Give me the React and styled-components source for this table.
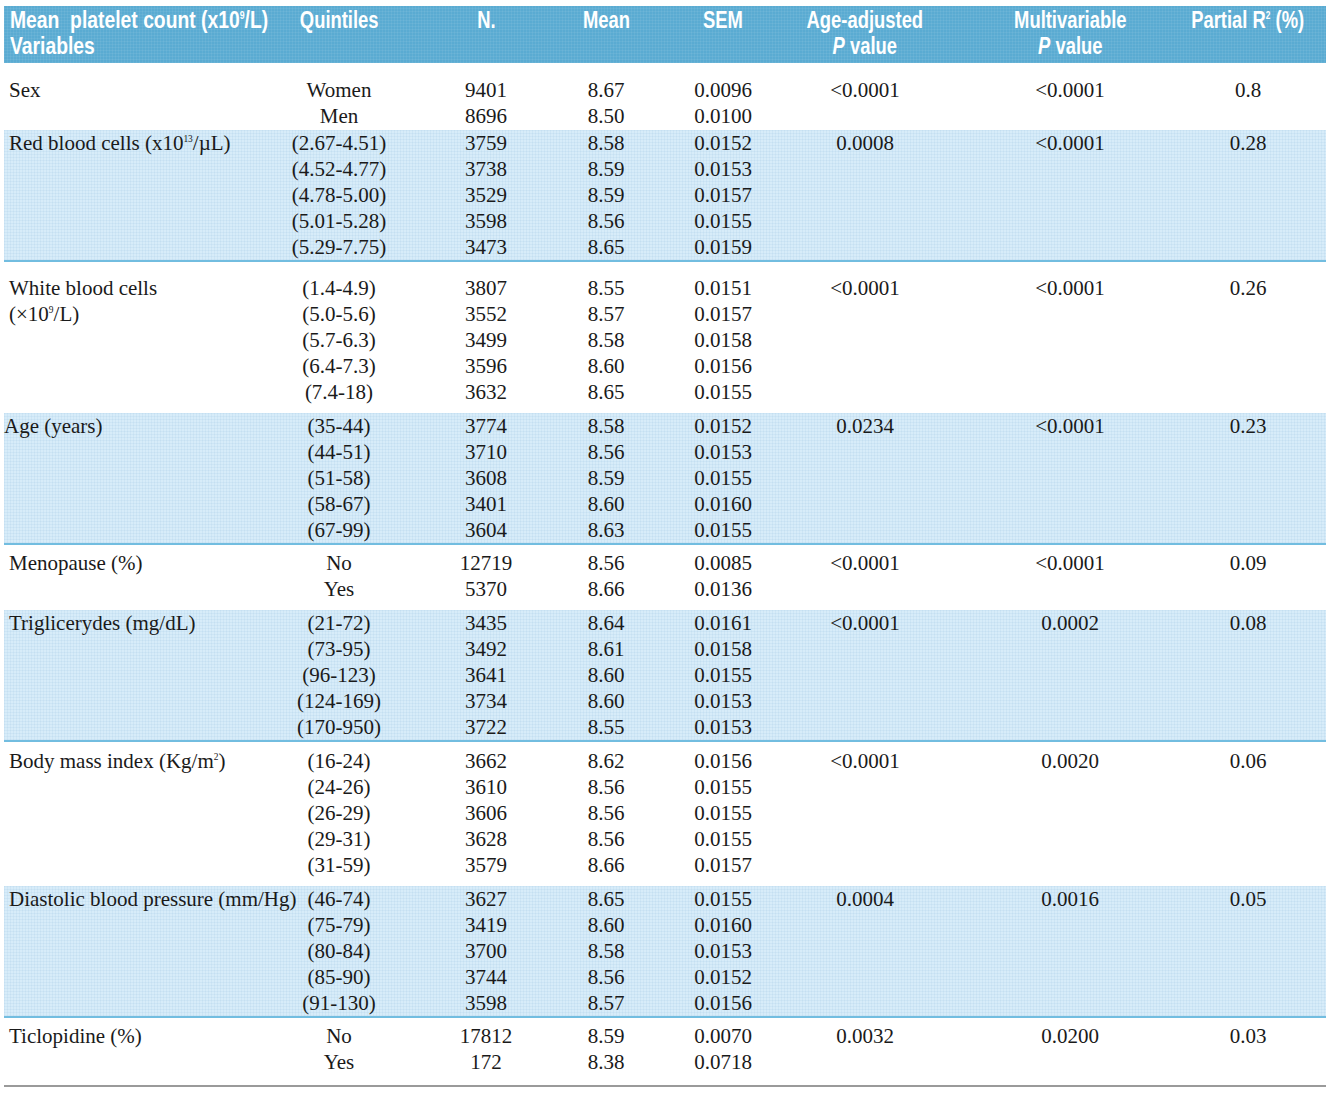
import React from 'react';
import styled, { createGlobalStyle } from 'styled-components';

const GlobalStyle = createGlobalStyle`
  body {
    margin: 0;
    background: #ffffff;
  }
`;

const COLS = '266px 138px 156px 84px 150px 134px 276px 80px 38px';

const StyledTable = styled.div`
  margin: 6px 5px 0 4px;
  width: 1322px;
  font-family: 'Liberation Serif', 'Times New Roman', serif;
  font-size: 21px;
  color: #1a1a1a;
  border-bottom: 2px solid #9a9a9a;
`;

const HeaderRow = styled.div`
  display: grid;
  grid-template-columns: ${COLS};
  height: 57px;
  background-color: #5aabd2;
  background-image:
    repeating-linear-gradient(0deg, rgba(255, 255, 255, 0.06) 0 1px, transparent 1px 3px),
    repeating-linear-gradient(90deg, rgba(255, 255, 255, 0.06) 0 1px, transparent 1px 3px);
  color: #ffffff;
  font-family: 'Liberation Sans', Arial, sans-serif;
  font-weight: 700;
  font-size: 23px;
  line-height: 26px;
  padding-top: 1px;
  box-sizing: border-box;
`;

const HeadCell = styled.div`
  display: flex;
  justify-content: ${p => (p.$left ? 'flex-start' : 'center')};
  padding-left: ${p => (p.$left ? '6px' : '0')};
  white-space: nowrap;
`;

/* the print face is a condensed grotesque; squeeze Arial to match */
const HeadText = styled.span`
  display: inline-block;
  text-align: ${p => (p.$left ? 'left' : 'center')};
  transform: scaleX(${p => (p.$left ? 0.84 : 0.8)});
  transform-origin: ${p => (p.$left ? 'left' : 'center')} top;
  em {
    font-style: italic;
  }
`;

const Section = styled.div`
  display: grid;
  grid-template-columns: ${COLS};
  padding: ${p => p.$top}px 0 ${p => p.$bottom}px;
  line-height: 26px;
  background-color: ${p => (p.$shaded ? '#d7ecf9' : '#ffffff')};
  background-image: ${p =>
    p.$shaded
      ? `repeating-linear-gradient(0deg, rgba(120, 170, 210, 0.10) 0 1px, transparent 1px 3px),
         repeating-linear-gradient(90deg, rgba(120, 170, 210, 0.10) 0 1px, transparent 1px 3px)`
      : 'none'};
  border-bottom: ${p => (p.$shaded ? '2px solid #72bde0' : 'none')};
`;

const Label = styled.div`
  padding-left: ${p => p.$indent}px;
  white-space: nowrap;
  position: relative;
  z-index: 1;
`;

const Col = styled.div`
  display: flex;
  flex-direction: column;
  align-items: center;
  white-space: nowrap;
`;

const Sup = styled.sup`
  font-size: 0.45em;
  line-height: 0;
  vertical-align: 0.9em;
`;

const sections = [
  {
    label: 'Sex',
    top: 14, bottom: 1,
    q: ['Women', 'Men'],
    n: ['9401', '8696'],
    mean: ['8.67', '8.50'],
    sem: ['0.0096', '0.0100'],
    age: '<0.0001', multi: '<0.0001', r2: '0.8',
  },
  {
    label: <>Red blood cells (x10<Sup>13</Sup>/µL)</>,
    shaded: true, top: 0, bottom: 0,
    q: ['(2.67-4.51)', '(4.52-4.77)', '(4.78-5.00)', '(5.01-5.28)', '(5.29-7.75)'],
    n: ['3759', '3738', '3529', '3598', '3473'],
    mean: ['8.58', '8.59', '8.59', '8.56', '8.65'],
    sem: ['0.0152', '0.0153', '0.0157', '0.0155', '0.0159'],
    age: '0.0008', multi: '<0.0001', r2: '0.28',
  },
  {
    label: <>White blood cells<br />(×10<Sup>9</Sup>/L)</>,
    top: 13, bottom: 8,
    q: ['(1.4-4.9)', '(5.0-5.6)', '(5.7-6.3)', '(6.4-7.3)', '(7.4-18)'],
    n: ['3807', '3552', '3499', '3596', '3632'],
    mean: ['8.55', '8.57', '8.58', '8.60', '8.65'],
    sem: ['0.0151', '0.0157', '0.0158', '0.0156', '0.0155'],
    age: '<0.0001', multi: '<0.0001', r2: '0.26',
  },
  {
    label: 'Age (years)',
    indent: 0,
    shaded: true, top: 0, bottom: 0,
    q: ['(35-44)', '(44-51)', '(51-58)', '(58-67)', '(67-99)'],
    n: ['3774', '3710', '3608', '3401', '3604'],
    mean: ['8.58', '8.56', '8.59', '8.60', '8.63'],
    sem: ['0.0152', '0.0153', '0.0155', '0.0160', '0.0155'],
    age: '0.0234', multi: '<0.0001', r2: '0.23',
  },
  {
    label: 'Menopause (%)',
    top: 5, bottom: 8,
    q: ['No', 'Yes'],
    n: ['12719', '5370'],
    mean: ['8.56', '8.66'],
    sem: ['0.0085', '0.0136'],
    age: '<0.0001', multi: '<0.0001', r2: '0.09',
  },
  {
    label: 'Triglicerydes (mg/dL)',
    shaded: true, top: 0, bottom: 0,
    q: ['(21-72)', '(73-95)', '(96-123)', '(124-169)', '(170-950)'],
    n: ['3435', '3492', '3641', '3734', '3722'],
    mean: ['8.64', '8.61', '8.60', '8.60', '8.55'],
    sem: ['0.0161', '0.0158', '0.0155', '0.0153', '0.0153'],
    age: '<0.0001', multi: '0.0002', r2: '0.08',
  },
  {
    label: <>Body mass index (Kg/m<Sup>2</Sup>)</>,
    top: 6, bottom: 8,
    q: ['(16-24)', '(24-26)', '(26-29)', '(29-31)', '(31-59)'],
    n: ['3662', '3610', '3606', '3628', '3579'],
    mean: ['8.62', '8.56', '8.56', '8.56', '8.66'],
    sem: ['0.0156', '0.0155', '0.0155', '0.0155', '0.0157'],
    age: '<0.0001', multi: '0.0020', r2: '0.06',
  },
  {
    label: 'Diastolic blood pressure (mm/Hg)',
    shaded: true, top: 0, bottom: 0,
    q: ['(46-74)', '(75-79)', '(80-84)', '(85-90)', '(91-130)'],
    n: ['3627', '3419', '3700', '3744', '3598'],
    mean: ['8.65', '8.60', '8.58', '8.56', '8.57'],
    sem: ['0.0155', '0.0160', '0.0153', '0.0152', '0.0156'],
    age: '0.0004', multi: '0.0016', r2: '0.05',
  },
  {
    label: 'Ticlopidine (%)',
    top: 5, bottom: 10,
    q: ['No', 'Yes'],
    n: ['17812', '172'],
    mean: ['8.59', '8.38'],
    sem: ['0.0070', '0.0718'],
    age: '0.0032', multi: '0.0200', r2: '0.03',
  },
];

const Lines = ({ items }) => (
  <Col>
    {items.map((t, i) => (
      <span key={i}>{t}</span>
    ))}
  </Col>
);

const Head = ({ left, children }) => (
  <HeadCell $left={left}>
    <HeadText $left={left}>{children}</HeadText>
  </HeadCell>
);

export default function App() {
  return (
    <>
      <GlobalStyle />
      <StyledTable>
        <HeaderRow>
          <Head left>
            Mean&nbsp; platelet count (x10<Sup>9</Sup>/L)
            <br />
            Variables
          </Head>
          <Head>Quintiles</Head>
          <Head>N.</Head>
          <Head>Mean</Head>
          <Head>SEM</Head>
          <Head>
            Age-adjusted
            <br />
            <em>P</em> value
          </Head>
          <Head>
            Multivariable
            <br />
            <em>P</em> value
          </Head>
          <Head>
            Partial R<Sup>2</Sup> (%)
          </Head>
          <div />
        </HeaderRow>
        {sections.map((s, i) => (
          <Section key={i} $shaded={s.shaded} $top={s.top} $bottom={s.bottom}>
            <Label $indent={s.indent ?? 5}>{s.label}</Label>
            <Lines items={s.q} />
            <Lines items={s.n} />
            <Lines items={s.mean} />
            <Lines items={s.sem} />
            <Lines items={[s.age]} />
            <Lines items={[s.multi]} />
            <Lines items={[s.r2]} />
            <div />
          </Section>
        ))}
      </StyledTable>
    </>
  );
}
